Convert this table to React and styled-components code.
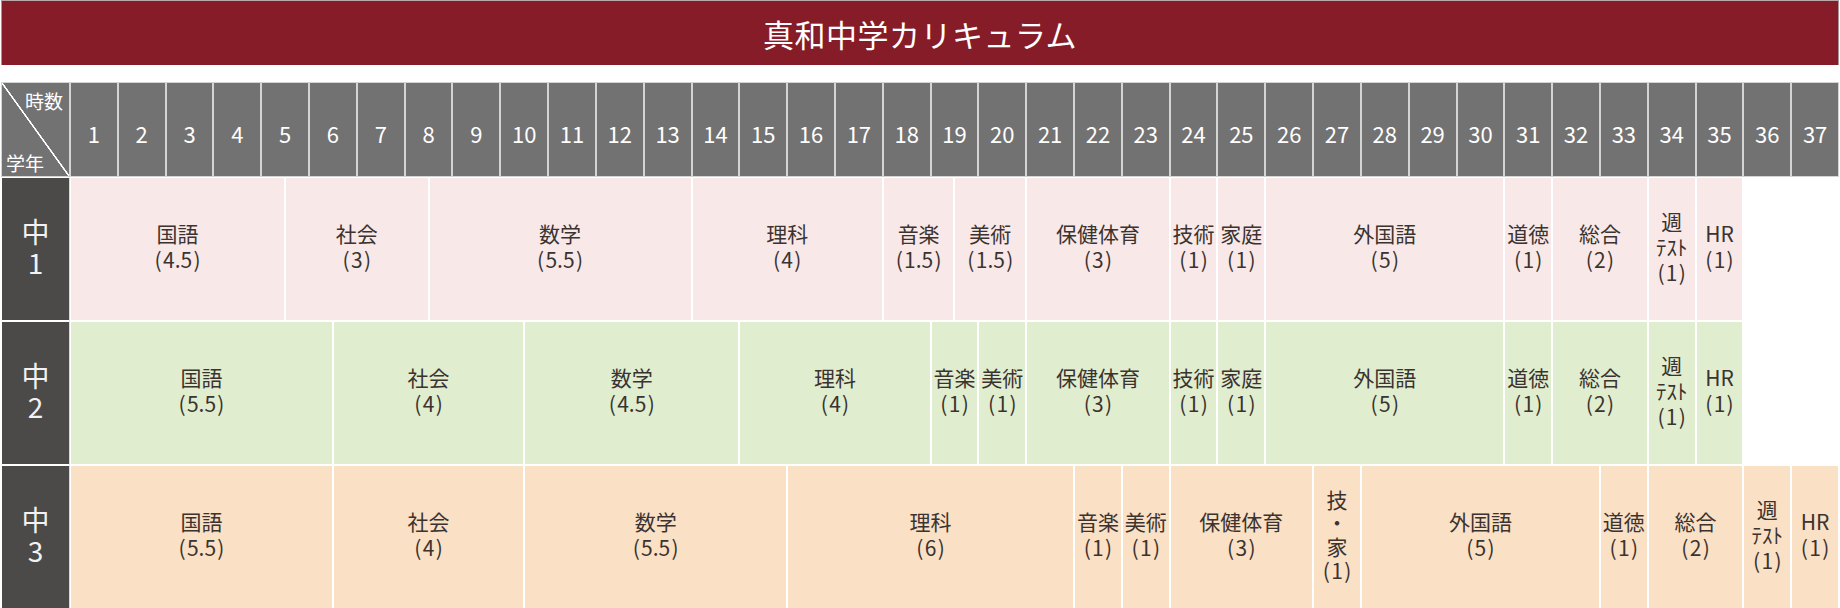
import styled, { createGlobalStyle } from 'styled-components'

const GlobalStyle = createGlobalStyle`
  *, *::before, *::after { box-sizing: border-box; }
  body {
    margin: 0;
    background: #fff;
    font-family: "Noto Sans CJK JP", "Noto Sans", sans-serif;
  }
`

const TONES = {
  pink: '#f8e9e8',
  green: '#e0edcf',
  peach: '#fae0c4',
}

const GRADES = [
  {
    grade: '1',
    tone: 'pink',
    subjects: [
      [['国語'], 4.5],
      [['社会'], 3],
      [['数学'], 5.5],
      [['理科'], 4],
      [['音楽'], 1.5],
      [['美術'], 1.5],
      [['保健体育'], 3],
      [['技術'], 1],
      [['家庭'], 1],
      [['外国語'], 5],
      [['道徳'], 1],
      [['総合'], 2],
      [['週', 'ﾃｽﾄ'], 1],
      [['HR'], 1],
    ],
  },
  {
    grade: '2',
    tone: 'green',
    subjects: [
      [['国語'], 5.5],
      [['社会'], 4],
      [['数学'], 4.5],
      [['理科'], 4],
      [['音楽'], 1],
      [['美術'], 1],
      [['保健体育'], 3],
      [['技術'], 1],
      [['家庭'], 1],
      [['外国語'], 5],
      [['道徳'], 1],
      [['総合'], 2],
      [['週', 'ﾃｽﾄ'], 1],
      [['HR'], 1],
    ],
  },
  {
    grade: '3',
    tone: 'peach',
    subjects: [
      [['国語'], 5.5],
      [['社会'], 4],
      [['数学'], 5.5],
      [['理科'], 6],
      [['音楽'], 1],
      [['美術'], 1],
      [['保健体育'], 3],
      [['技', '・', '家'], 1],
      [['外国語'], 5],
      [['道徳'], 1],
      [['総合'], 2],
      [['週', 'ﾃｽﾄ'], 1],
      [['HR'], 1],
    ],
  },
]

const HOURS = Array.from({ length: 37 }, (_, i) => i + 1)

function App() {
  return (
    <Page>
      <GlobalStyle />
      <Title>真和中学カリキュラム</Title>

      <Table>
        <Row $height={95}>
          <Corner>
            <CornerTop>時数</CornerTop>
            <CornerBottom>学年</CornerBottom>
          </Corner>
          {HOURS.map((h) => (
            <HourCell key={h}>{h}</HourCell>
          ))}
        </Row>

        {GRADES.map((g) => (
          <Row key={g.grade} $height={144}>
            <GradeCell>
              <span>中</span>
              <span>{g.grade}</span>
            </GradeCell>
            {g.subjects.map(([lines, hours], i) => (
              <Subject
                key={i}
                $span={hours * 2}
                $tone={TONES[g.tone]}
                $tight={lines.length > 2}
              >
                {lines.map((l) => (
                  <span key={l}>{l}</span>
                ))}
                <span>(&#8202;{hours}&#8202;)</span>
              </Subject>
            ))}
          </Row>
        ))}
      </Table>
    </Page>
  )
}

export default App

const Page = styled.div`
  width: 1840px;
  padding: 0 1px;
`

const Title = styled.h1`
  margin: 0;
  height: 65px;
  display: flex;
  align-items: center;
  justify-content: center;
  background: #861c28;
  border-top: 1px solid #bba7a9;
  border-left: 1px solid #a99597;
  border-right: 1px solid #a99597;
  color: #fff;
  font-size: 31px;
  font-weight: 400;
  letter-spacing: 0.5px;
`

const Table = styled.div`
  margin-top: 17px;
  display: flex;
  flex-direction: column;
`

const Row = styled.div`
  display: grid;
  grid-template-columns: 69px repeat(74, 1fr);
  height: ${(p) => p.$height}px;
`

const Corner = styled.div`
  display: flex;
  flex-direction: column;
  justify-content: space-between;
  padding: 8px 6px 4px 4px;
  border: 1px solid #d4d4d4;
  background: linear-gradient(
    to top right,
    #727272 calc(50% - 1px),
    #fff calc(50% - 0.6px),
    #fff calc(50% + 0.6px),
    #727272 calc(50% + 1px)
  );
  color: #fff;
  font-size: 19px;
  line-height: 1;
`

const CornerTop = styled.span`
  align-self: flex-end;
`

const CornerBottom = styled.span`
  align-self: flex-start;
`

const HourCell = styled.div`
  grid-column: span 2;
  display: flex;
  align-items: center;
  justify-content: center;
  padding-top: 6px;
  background: #727272;
  border: 1px solid #d4d4d4;
  color: #fff;
  font-size: 22px;
`

const GradeCell = styled.div`
  display: flex;
  flex-direction: column;
  align-items: center;
  justify-content: center;
  background: #4b4a48;
  border: 1px solid #fff;
  border-right-color: #d8d8d8;
  color: #f2f2f2;
  font-size: 28px;
  line-height: 1.1;
  padding-bottom: 4px;
`

const Subject = styled.div`
  grid-column: span ${(p) => p.$span};
  display: flex;
  flex-direction: column;
  align-items: center;
  justify-content: center;
  background: ${(p) => p.$tone};
  border: 1px solid #fff;
  color: #3b3330;
  font-size: 21px;
  line-height: ${(p) => (p.$tight ? 1.12 : 1.22)};
  white-space: nowrap;
  padding-bottom: 4px;
`
